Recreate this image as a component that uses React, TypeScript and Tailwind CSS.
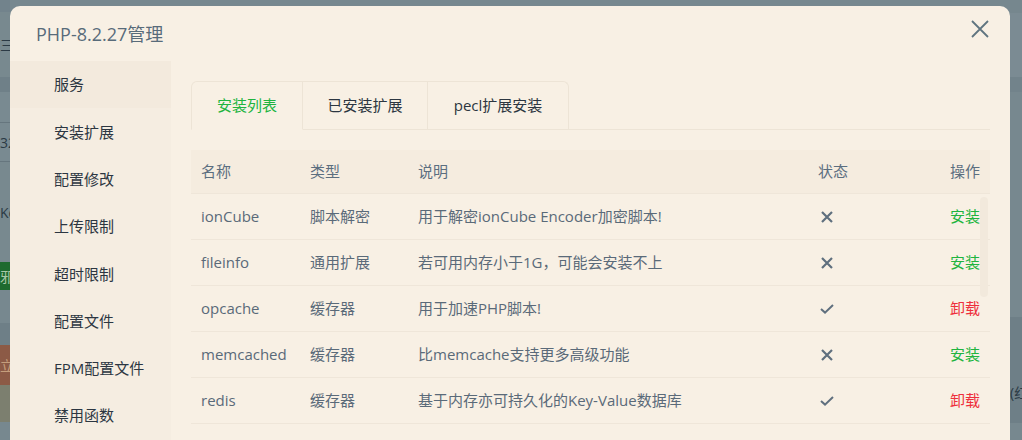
import React from "react";

const rows = [
  { name: "ionCube", type: "脚本解密", desc: "用于解密ionCube Encoder加密脚本!", ok: false },
  { name: "fileinfo", type: "通用扩展", desc: "若可用内存小于1G，可能会安装不上", ok: false },
  { name: "opcache", type: "缓存器", desc: "用于加速PHP脚本!", ok: true },
  { name: "memcached", type: "缓存器", desc: "比memcache支持更多高级功能", ok: false },
  { name: "redis", type: "缓存器", desc: "基于内存亦可持久化的Key-Value数据库", ok: true },
];

const menu = ["服务", "安装扩展", "配置修改", "上传限制", "超时限制", "配置文件", "FPM配置文件", "禁用函数"];

function XIcon() {
  return (
    <svg width="12" height="12" viewBox="0 0 12 12" className="ml-[3px]">
      <path d="M1 1 L11 11 M11 1 L1 11" stroke="#5f6f7e" strokeWidth="2.2" fill="none" />
    </svg>
  );
}

function CheckIcon() {
  return (
    <svg width="14" height="10" viewBox="0 0 14 10" className="ml-[2px]">
      <path d="M1 5 L5 8.6 L13 1" stroke="#5f6f7e" strokeWidth="2" fill="none" />
    </svg>
  );
}

export default function App() {
  return (
    <div className="relative w-[1022px] h-[440px] overflow-hidden bg-[#77888f] font-['Open_Sans','Noto_Sans_CJK_SC',sans-serif]">
      {/* background page behind the overlay */}
      <div className="flex h-full justify-between">
        <div className="w-[10px] flex flex-col text-[14px] overflow-hidden">
          <div className="h-[12px] bg-[#72838c]" />
          <div className="h-[65px] bg-[#78898f] flex items-center text-[#2b3a45] leading-none">三</div>
          <div className="h-[15px] bg-[#6f8088]" />
          <div className="h-[31px] bg-[#798a91] border-b border-[#66767e]" />
          <div className="h-[39px] bg-[#798a91] border-b border-[#66767e] flex items-center text-[#2b3a45]">32</div>
          <div className="h-[100px] bg-[#78898f] flex items-center text-[#2b3a45]">Ke</div>
          <div className="h-[28px] bg-[#1e6a2f] flex items-center text-[#a9c8a8]">邪</div>
          <div className="h-[33px] bg-[#77888f]" />
          <div className="h-[22px] bg-[#6e7f87]" />
          <div className="h-[40px] bg-[#8c5a46] flex items-center text-[#c59e7c]">立</div>
          <div className="h-[37px] bg-[#7c7f6f]" />
          <div className="flex-1 bg-[#77888f]" />
        </div>
        <div className="w-[12px] flex flex-col text-[14px] overflow-hidden">
          <div className="h-[13px] bg-[#76878e]" />
          <div className="h-[64px] bg-[#7b8b93]" />
          <div className="h-[15px] bg-[#72838b]" />
          <div className="h-[225px] bg-[#77888f]" />
          <div className="h-[106px] bg-[#6e7f87] flex items-end pb-[20px] text-[#2b3a45] whitespace-nowrap">(红</div>
          <div className="flex-1 bg-[#77888f]" />
        </div>
      </div>

      {/* dialog */}
      <div className="absolute left-[10px] top-[6px] w-[1000px] h-[460px] bg-[#f8f0e4] rounded-t-[10px] flex flex-col">
        <div className="h-[55px] flex justify-between pl-[26px] pr-[21px] shrink-0">
          <div className="text-[18px] text-[#586b7a] leading-none flex items-center pt-[1px]">PHP-8.2.27管理</div>
          <button className="mt-[14px] w-[18px] h-[18px]">
            <svg width="18" height="18" viewBox="0 0 18 18">
              <path d="M1 1 L17 17 M17 1 L1 17" stroke="#5f7480" strokeWidth="1.8" fill="none" />
            </svg>
          </button>
        </div>
        <div className="flex flex-1">
          <div className="w-[161px] bg-[#f5ede1] flex flex-col">
            {menu.map((m, i) => (
              <div
                key={m}
                className={
                  "h-[47.3px] flex items-center pl-[44px] text-[15px] text-[#2c3641] " +
                  (i === 0 ? "bg-[#f3eadd]" : "")
                }
              >
                {m}
              </div>
            ))}
          </div>
          <div className="flex-1 pl-[20px] pr-[20px] pt-[20px] relative">
            <div className="flex h-[49px] border-b border-[#ede4d6]">
              <div className="w-[112px] -mb-px border border-[#ede4d6] border-b-[#f8f0e4] rounded-tl-[6px] flex items-center justify-center text-[15px] text-[#20b43f]">
                安装列表
              </div>
              <div className="w-[125px] border-t border-r border-[#ede4d6] flex items-center justify-center text-[15px] text-[#2c3641]">
                已安装扩展
              </div>
              <div className="w-[141px] border-t border-r border-[#ede4d6] rounded-tr-[6px] flex items-center justify-center text-[15px] text-[#2c3641]">
                pecl扩展安装
              </div>
            </div>
            <div className="mt-[20px] text-[15px]">
              <div className="flex h-[44px] items-center bg-[#f5ecdf] border-b border-[#efe6d9] text-[#5b6e7f]">
                <div className="w-[109px] pl-[10px]">名称</div>
                <div className="w-[108px] pl-[10px]">类型</div>
                <div className="w-[400px] pl-[10px]">说明</div>
                <div className="flex-1 pl-[10px]">状态</div>
                <div className="pr-[10px]">操作</div>
              </div>
              {rows.map((r) => (
                <div key={r.name} className="flex h-[46px] items-center border-b border-[#efe6d9] text-[#5a6a79]">
                  <div className="w-[109px] pl-[10px] whitespace-nowrap">{r.name}</div>
                  <div className="w-[108px] pl-[10px]">{r.type}</div>
                  <div className="w-[400px] pl-[10px] whitespace-nowrap">{r.desc}</div>
                  <div className="flex-1 pl-[10px] flex items-center">{r.ok ? <CheckIcon /> : <XIcon />}</div>
                  <div className={"pr-[10px] " + (r.ok ? "text-[#ee2f3c]" : "text-[#20b43f]")}>
                    {r.ok ? "卸载" : "安装"}
                  </div>
                </div>
              ))}
            </div>
            <div className="absolute right-[22px] top-[136px] w-[8px] h-[100px] rounded-[4px] bg-[#f2e9dc]" />
          </div>
        </div>
      </div>
    </div>
  );
}
